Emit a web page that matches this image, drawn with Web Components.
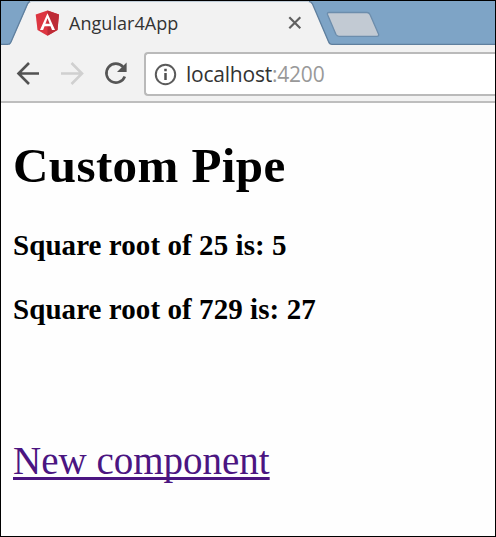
<!DOCTYPE html>
<html lang="en">
<head>
<meta charset="utf-8">
<title>Angular4App</title>
<style>
html, body { margin: 0; height: 100%; overflow: hidden; background: #fff; }
</style>
</head>
<body>
<browser-window>
  <tab-strip slot="tabs">Angular4App</tab-strip>
  <tool-bar slot="toolbar"><address-bar port=":4200">localhost</address-bar></tool-bar>
  <pipe-page>
    <span slot="title">Custom Pipe</span>
    <result-line>Square root of 25 is: 5</result-line>
    <result-line>Square root of 729 is: 27</result-line>
    <page-link slot="link">New component</page-link>
  </pipe-page>
</browser-window>
<script>
function define(name, html) {
  const template = document.createElement('template');
  template.innerHTML = html;
  customElements.define(name, class extends HTMLElement {
    constructor() {
      super();
      this.attachShadow({ mode: 'open' }).append(template.content.cloneNode(true));
    }
    connectedCallback() {
      const port = this.shadowRoot.querySelector('.port');
      if (port) port.textContent = this.getAttribute('port');
    }
  });
}

define('browser-window', `
<style>
:host { display: flex; flex-direction: column; box-sizing: border-box; width: 496px; height: 537px; border: 1px solid #000; background: #fefefe; overflow: hidden; }
</style>
<slot name="tabs"></slot><slot name="toolbar"></slot><slot></slot>`);

define('tab-strip', `
<style>
:host { display: grid; height: 44px; flex: none; }
.shape, .row { grid-area: 1 / 1; }
.shape { display: block; }
.row { display: flex; align-items: center; height: 44px; padding-left: 34px; box-sizing: border-box; }
.title { width: 211px; margin: 0 8px 0 9px; white-space: nowrap; font: 18px/26px "Open Sans", sans-serif; color: #333; letter-spacing: .05px; }
svg { flex: none; }
</style>
<svg class="shape" width="494" height="44" viewBox="1 1 494 44">
  <rect x="1" y="1" width="494" height="44" fill="#7ea4c6"/>
  <path d="M9.5 45L10.5 43.5L28 4Q29 1 31 1H309Q311 1 312.500 4L328 41Q329 44 332 44H495V46H0V44H8Z" fill="#f2f2f2"/>
  <path d="M1 44.300H8Q10 44.300 11 42L27.500 4Q28.500 1.500 31 1.300H308Q311 1.300 312.500 4L328.500 41.500Q329.500 44.300 332 44.300H495" fill="none" stroke="#5f7f9e" stroke-width="1.300"/>
  <path d="M30 1.800H309" stroke="#e8edf1" stroke-width="1"/>
  <path d="M329 12.500H367Q369 12.500 370 14.500L378.500 34Q379.300 36.300 377 36.300H339Q337 36.300 336 34.500L327.500 14.500Q327 12.500 329 12.500Z" fill="#c2cad3" stroke="#6c8dac" stroke-width="1.300"/>
</svg>
<div class="row">
  <svg width="25" height="26" viewBox="34.500 10 25 26">
    <path d="M47 10.500L58.500 14.500L57 30L47 35.800L37 30L35.200 14.500Z" fill="#dd3641"/>
    <path d="M47 10.500L58.500 14.500L57 30L47 35.800Z" fill="#bd2b36"/>
    <path fill-rule="evenodd" d="M47 13.200L39.500 30H42.600L44.100 26.300H50L51.500 30H54.500ZM47 18.300L49.200 23.700H44.900Z" fill="#fff"/>
  </svg>
  <span class="title"><slot></slot></span>
  <svg width="14" height="14" viewBox="0 0 14 14"><path d="M1.300 1.300L12.300 12.300M12.300 1.300L1.300 12.300" stroke="#606060" stroke-width="2.200"/></svg>
</div>`);

define('tool-bar', `
<style>
:host { display: flex; flex: none; height: 58px; box-sizing: border-box; padding: 7px 0 5px 15px; align-items: center; background: #f2f2f2; border-bottom: 2px solid #bebebe; }
svg { flex: none; }
.address { margin-left: 15px; flex: 1; min-width: 0; }
</style>
<svg width="113" height="26" viewBox="16 61 113 26" fill="none" stroke-width="2.600">
  <path d="M39 73.500H19M29 63L18.500 73.500L29 84" stroke="#535353"/>
  <path d="M61 73.500H81M71.500 63L82 73.500L71.500 84" stroke="#d0d0d0"/>
  <path d="M123 66.800A9.500 9.500 0 1 0 124.800 76.500" stroke="#555"/>
  <path d="M126.600 62.500V72H117Z" fill="#555"/>
</svg>
<div class="address"><slot></slot></div>`);

define('address-bar', `
<style>
:host { display: flex; align-items: center; height: 44px; box-sizing: border-box; border: 2px solid #bababa; border-right: 0; border-radius: 4px 0 0 4px; background: #fff; padding-left: 8px; font: 21px/30px "Open Sans", sans-serif; letter-spacing: -.22px; color: #333; white-space: nowrap; }
svg { flex: none; margin-right: 9px; }
.port { color: #999; }
</style>
<svg width="23" height="23" viewBox="0 0 23 23"><circle cx="11.500" cy="11.500" r="9.700" fill="none" stroke="#5b5b5b" stroke-width="2"/><path d="M11.500 10V17M11.500 5.800V8.300" stroke="#505050" stroke-width="2.500"/></svg>
<span class="url"><slot></slot><span class="port"></span></span>`);

define('pipe-page', `
<style>
:host { display: flex; flex-direction: column; flex: 1; padding: 35px 0 0 12px; font-family: "Liberation Serif", serif; color: #000; background: #fefefe; }
h1 { margin: 0 0 35px; font-size: 49px; line-height: 56px; letter-spacing: .4px; }
.results { display: flex; flex-direction: column; gap: 32px; height: 210px; }
</style>
<h1><slot name="title"></slot></h1>
<div class="results"><slot></slot></div>
<slot name="link"></slot>`);

define('result-line', `
<style>
:host { display: block; font-size: 29px; line-height: 32px; font-weight: bold; letter-spacing: .07px; white-space: nowrap; }
</style><slot></slot>`);

define('page-link', `
<style>
:host { display: block; font-size: 39px; line-height: 44px; }
a { color: #4b1581; text-decoration: underline; text-decoration-thickness: 3px; text-underline-offset: 3px; text-decoration-skip-ink: none; }
</style><a href="#"><slot></slot></a>`);
</script>
</body>
</html>
